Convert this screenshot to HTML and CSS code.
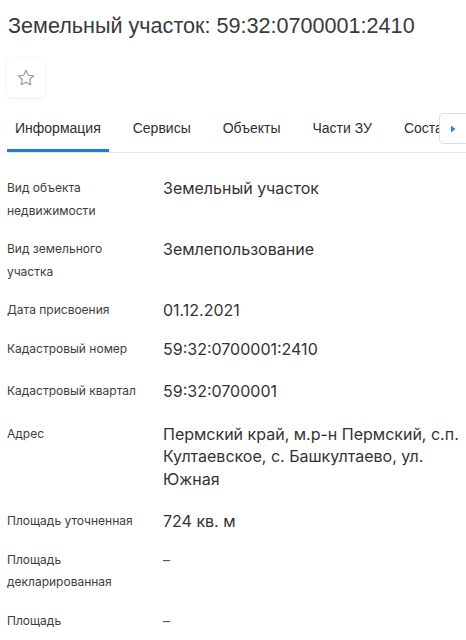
FILE: index.html
```html
<!DOCTYPE html>
<html lang="ru">
<head>
<meta charset="utf-8">
<link rel="stylesheet" href="styles.css">
</head>
<body>
<div class="page">
  <h1 class="title">Земельный участок: 59:32:0700001:2410</h1>
  <div class="actions">
    <button class="fav" type="button" aria-label="В избранное">
      <svg width="20" height="20" viewBox="0 0 24 24"><path d="M12 2.8l2.75 5.9 6.45.75-4.8 4.4 1.3 6.35L12 17l-5.7 3.2 1.3-6.35-4.8-4.4 6.45-.75z" fill="none" stroke="#9a9a9a" stroke-width="1.4" stroke-linejoin="round"/></svg>
    </button>
  </div>
  <div class="tabs">
    <div class="tab-list">
      <span class="tab active">Информация</span>
      <span class="tab">Сервисы</span>
      <span class="tab">Объекты</span>
      <span class="tab">Части ЗУ</span>
      <span class="tab">Состав</span>
    </div>
    <button class="tab-next" type="button" aria-label="Далее">
      <svg width="8" height="10" viewBox="0 0 8 10"><path d="M2 1.5 L6.5 5 L2 8.5 Z" fill="#1e88e5"/></svg>
    </button>
  </div>
  <dl class="props">
    <div class="row"><dt>Вид объекта недвижимости</dt><dd>Земельный участок</dd></div>
    <div class="row"><dt>Вид земельного участка</dt><dd>Землепользование</dd></div>
    <div class="row"><dt>Дата присвоения</dt><dd>01.12.2021</dd></div>
    <div class="row row-code"><dt>Кадастровый номер</dt><dd>59:32:0700001:2410</dd></div>
    <div class="row row-code"><dt>Кадастровый квартал</dt><dd>59:32:0700001</dd></div>
    <div class="row row-long"><dt>Адрес</dt><dd>Пермский край, м.р-н Пермский, с.п. Култаевское, с. Башкултаево, ул. Южная</dd></div>
    <div class="row"><dt>Площадь уточненная</dt><dd>724 кв. м</dd></div>
    <div class="row"><dt>Площадь декларированная</dt><dd class="dash">–</dd></div>
    <div class="row"><dt>Площадь</dt><dd class="dash">–</dd></div>
  </dl>
</div>
</body>
</html>
```

FILE: styles.css
```css
html, body {
  margin: 0;
  padding: 0;
  background: #fff;
}
body {
  overflow: hidden;
}
.page {
  padding: 0 0 0 7px;
}
.title {
  margin: 0;
  padding: 13px 0 0 1px;
  font-family: "Liberation Sans", Arial, sans-serif;
  font-weight: normal;
  font-size: 21.6px;
  line-height: 25px;
  color: #3a3a3a;
  white-space: nowrap;
}
.actions {
  display: flex;
  padding-top: 21px;
}
.fav {
  width: 38px;
  height: 38px;
  display: flex;
  align-items: center;
  justify-content: center;
  padding: 0;
  border: none;
  border-radius: 3px;
  background: #fff;
  box-shadow: 0 1px 4px rgba(0,0,0,0.08);
}
.tabs {
  position: relative;
  margin-top: 18px;
  border-bottom: 1px solid #e6e6e6;
}
.tab-list {
  display: flex;
  white-space: nowrap;
  overflow: hidden;
  font-family: "Liberation Sans", Arial, sans-serif;
  font-size: 14px;
  color: #2e2e2e;
}
.tab {
  padding: 5px 8px 12px 8px;
  margin-right: 16px;
  border-bottom: 3px solid transparent;
  line-height: 17px;
}
.tab.active {
  border-bottom-color: #1e7bd6;
}
.tab-next {
  position: absolute;
  right: -6px;
  top: -2px;
  width: 33px;
  height: 31px;
  padding: 0 6px 0 0;
  border: 1px solid #dedede;
  border-radius: 4px;
  background: #fff;
  display: flex;
  align-items: center;
  justify-content: center;
}
.props {
  margin: 24px 0 0 0;
  padding: 0;
  font-family: Inter, "Noto Sans", sans-serif;
}
.row {
  display: grid;
  grid-template-columns: 156px 1fr;
  padding-bottom: 16px;
}
.row-code {
  padding-bottom: 20px;
}
.row-long {
  padding-bottom: 20px;
}
.row dt {
  font-size: 12px;
  line-height: 22.5px;
  color: #3d3d3d;
  padding-right: 20px;
}
.row dd {
  margin: 0;
  font-size: 16px;
  line-height: 22.5px;
  color: #333;
}
.row dd.dash {
  font-size: 14px;
  color: #555;
}
```
